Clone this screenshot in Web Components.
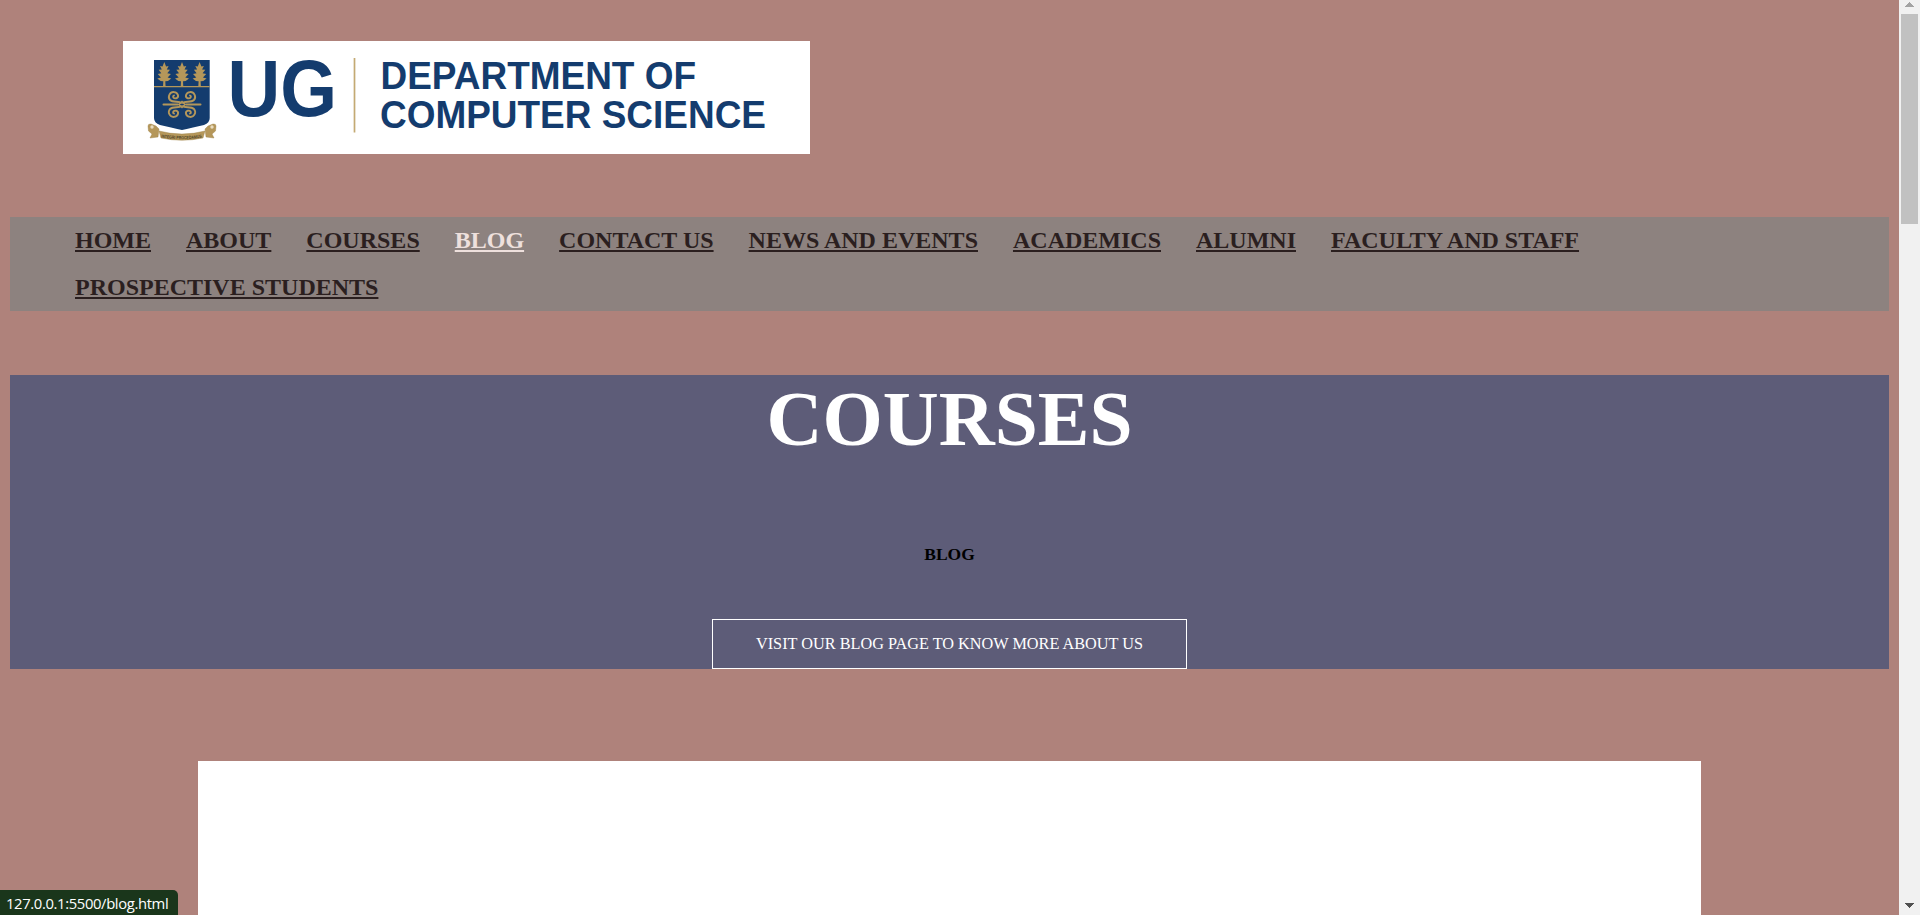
<!DOCTYPE html>
<html lang="en">
<head>
<meta charset="utf-8">
<title>Blog</title>
<style>
html,body{margin:0;height:100%;overflow:hidden}
body{background:#af827b;font-family:"Liberation Serif","Times New Roman",serif}
</style>
</head>
<body>
<blog-page></blog-page>
<script>
const define=(name,html)=>customElements.define(name,class extends HTMLElement{
  constructor(){super();this.attachShadow({mode:'open'}).innerHTML=html;}
});

define('dept-logo',`<style>
:host{display:block;width:687px;height:113px;background:#fff}
svg{display:block}
text{font-family:"Liberation Sans",Arial,sans-serif;font-weight:700;fill:#143c6e}
</style>
<svg width="687" height="113" viewBox="123 41 687 113">
  <path d="M154 60H209.700V118Q209.700 123 204 125L193 127.500Q186 129 182 130Q178 129 171 127.500L160 125Q154 123 154 118Z" fill="#143c6e"/>
  <path d="M154 86.600H209.700" stroke="#b5975a" stroke-width="1.200"/>
  <defs><path id="tree" d="M0 -25L1.800 -20.500L4.300 -21L2.500 -17.500L5.700 -17.300L3 -13.700L6.600 -13L3.300 -9.500L7 -8.500Q4 -5.500 1 -5.700L1.300 0H-1.300L-1 -5.700Q-4 -5.500 -7 -8.500L-3.300 -9.500L-6.600 -13L-3 -13.700L-5.700 -17.300L-2.500 -17.500L-4.300 -21L-1.800 -20.500Z"/>
  <path id="curl" d="M1 -1.500C2.500 -4 9 -1.500 12 -4.500C14.800 -8 12 -12.800 8 -12.400C3.600 -12 2.600 -7.200 5.800 -6.200C8.500 -5.600 9.800 -8.200 8 -9"/></defs>
  <g fill="#b5975a"><use href="#tree" x="164.300" y="87"/><use href="#tree" x="182" y="87"/><use href="#tree" x="199.600" y="87"/></g>
  <g transform="translate(182 104.500)" fill="none" stroke="#b5975a" stroke-width="1.900" stroke-linecap="round">
    <use href="#curl"/><use href="#curl" transform="scale(-1 1)"/><use href="#curl" transform="scale(1 -1)"/><use href="#curl" transform="scale(-1 -1)"/>
    <path d="M-18.500 0H-4M4 0H18.500" stroke-width="2"/><path d="M0 -3L3 0L0 3L-3 0Z" stroke-width="1.500"/>
  </g>
  <g fill="#b5975a" stroke="#9b7d42" stroke-width=".4">
    <path d="M148 126Q148 123.700 151 124L156 126L159 129L158 137L150 138L152 134L148.500 131Z"/>
    <path d="M216 126Q216 123.700 213 124L208 126L205 129L206 137L214 138L212 134L215.500 131Z"/>
    <path d="M159 131Q182 137 205 131L203 138Q182 142.500 161 138Z"/>
  </g>
  <circle cx="152" cy="127" r="1.700" fill="#e9dcc0"/><circle cx="212" cy="127" r="1.700" fill="#e9dcc0"/>
  <path id="motto" d="M161 137.500Q182 141 203 137.500" fill="none"/>
  <text style="font-size:4.600px;fill:#4f4429"><textPath href="#motto" textLength="41" lengthAdjust="spacingAndGlyphs">INTEGRI PROCEDAMUS</textPath></text>
  <text x="227.500" y="116" font-size="79.500" textLength="109.500" lengthAdjust="spacingAndGlyphs">UG</text>
  <path d="M354.500 58V132.500" stroke="#c4aa73" stroke-width="1.700"/>
  <text font-size="39.500"><tspan x="380.500" y="88.500" textLength="315.500" lengthAdjust="spacingAndGlyphs">DEPARTMENT OF</tspan><tspan x="380" y="128" textLength="386" lengthAdjust="spacingAndGlyphs">COMPUTER SCIENCE</tspan></text>
</svg>`);

define('nav-link',`<style>
:host{display:block;height:47px;line-height:46px}
a{color:#2b1f1f;font-size:24px;font-weight:700;text-decoration:underline 2px;text-underline-offset:2px;white-space:nowrap}
:host([active]) a{color:#eee0dd}
</style><a><slot></slot></a>`);

define('site-nav',`<style>
:host{display:flex;flex-wrap:wrap;column-gap:35px;height:94px;background:#8d827f;padding:0 250px 0 65px;box-sizing:border-box;align-content:flex-start}
</style><slot></slot>`);

define('page-hero',`<style>
:host{display:flex;flex-direction:column;align-items:center;height:294px;background:#5d5c78}
h1{margin:0;font-size:77.5px;line-height:88px;font-weight:700;color:#fff}
h2{margin:81px 0 0;font-size:17.5px;line-height:20px;font-weight:700;color:#000}
a{margin-top:auto;box-sizing:border-box;width:475px;height:50px;line-height:48px;border:1px solid #fff;color:#fff;font-size:16.250px;text-align:center;white-space:nowrap}
</style><h1><slot name="title"></slot></h1><h2><slot name="sub"></slot></h2><a><slot name="action"></slot></a>`);

define('content-card',`<style>:host{display:block;background:#fff;height:400px}</style><slot></slot>`);

define('status-bubble',`<style>
:host{position:absolute;left:0;bottom:0;width:178px;height:25px;box-sizing:border-box;padding-left:6px;background:#1a361b;border-top-right-radius:5px;color:#fff;font:14.8px/26px "Open Sans","Noto Sans",sans-serif;letter-spacing:-.36px;white-space:nowrap}
</style><slot></slot>`);

define('scroll-bar',`<style>
:host{display:flex;flex-direction:column;align-items:center;flex:none;width:21px;height:100%;background:#f1f1f1}
svg{flex:none;display:block}i{display:block;width:17px;height:210px;background:#c1c1c1}
.end{margin-top:auto}
</style><svg width="21" height="14" shape-rendering="crispEdges"><path d="M6 7L10.500 2L15 7Z" fill="#a3a3a3"/></svg><i></i><svg class="end" width="21" height="14" shape-rendering="crispEdges"><path d="M6 2H15L10.500 7Z" fill="#505050"/></svg>`);

define('blog-page',`<style>
:host{display:flex;height:915px;overflow:hidden;position:relative}
main{flex:1;min-width:0;padding:41px 10px 0;box-sizing:border-box;overflow:hidden}
dept-logo{margin-left:113px}
site-nav{margin-top:63px}
page-hero{margin-top:64px}
content-card{margin:92px 188px 0}
</style>
<main>
<dept-logo></dept-logo>
<site-nav><nav-link>HOME</nav-link><nav-link>ABOUT</nav-link><nav-link>COURSES</nav-link><nav-link active>BLOG</nav-link><nav-link>CONTACT US</nav-link><nav-link>NEWS AND EVENTS</nav-link><nav-link>ACADEMICS</nav-link><nav-link>ALUMNI</nav-link><nav-link>FACULTY AND STAFF</nav-link><nav-link>PROSPECTIVE STUDENTS</nav-link></site-nav>
<page-hero><span slot="title">COURSES</span><span slot="sub">BLOG</span><span slot="action">VISIT OUR BLOG PAGE TO KNOW MORE ABOUT US</span></page-hero>
<content-card></content-card>
</main>
<scroll-bar></scroll-bar>
<status-bubble>127.0.0.1:5500/blog.html</status-bubble>`);
</script>
</body>
</html>
